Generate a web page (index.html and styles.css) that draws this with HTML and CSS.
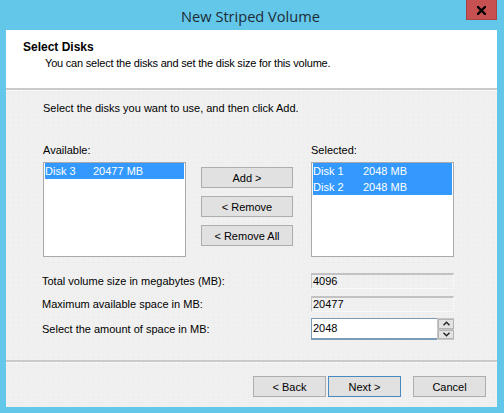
FILE: index.html
```html
<!DOCTYPE html>
<html>
<head>
<meta charset="utf-8">
<link rel="stylesheet" href="styles.css">
</head>
<body>
<div class="window">
  <div class="titlebar">
    <span class="title">New Striped Volume</span>
    <div class="close">
      <svg width="9" height="9" viewBox="0 0 9 9"><path d="M1 1L8 8M8 1L1 8" stroke="#000" stroke-width="2.4" stroke-linecap="square"/></svg>
    </div>
  </div>
  <div class="client">
    <div class="header">
      <div class="h-title">Select Disks</div>
      <div class="h-sub">You can select the disks and set the disk size for this volume.</div>
    </div>
    <div class="sep"></div>
    <div class="body">
      <div class="instr">Select the disks you want to use, and then click Add.</div>
      <div class="lists">
        <div class="col">
          <div class="lbl">Available:</div>
          <div class="listbox">
            <div class="item sel"><span class="c1">Disk 3</span><span>20477 MB</span></div>
          </div>
        </div>
        <div class="mid">
          <div class="btn">Add &gt;</div>
          <div class="btn">&lt; Remove</div>
          <div class="btn">&lt; Remove All</div>
        </div>
        <div class="col">
          <div class="lbl">Selected:</div>
          <div class="listbox">
            <div class="item sel"><span class="c1 c1r">Disk 1</span><span>2048 MB</span></div>
            <div class="item sel"><span class="c1 c1r">Disk 2</span><span>2048 MB</span></div>
          </div>
        </div>
      </div>
      <div class="fields">
        <div class="frow r1">
          <div class="flabel">Total volume size in megabytes (MB):</div>
          <div class="rbox">4096</div>
        </div>
        <div class="frow r2">
          <div class="flabel">Maximum available space in MB:</div>
          <div class="rbox">20477</div>
        </div>
        <div class="frow r3">
          <div class="flabel">Select the amount of space in MB:</div>
          <div class="spin">
            <div class="input">2048</div>
            <div class="arrows">
              <div class="arr"><svg width="7" height="5" viewBox="0 0 7 5"><path d="M0.5 4.2L3.5 1.2L6.5 4.2" fill="none" stroke="#222" stroke-width="1.4"/></svg></div>
              <div class="arr"><svg width="7" height="5" viewBox="0 0 7 5"><path d="M0.5 0.8L3.5 3.8L6.5 0.8" fill="none" stroke="#222" stroke-width="1.4"/></svg></div>
            </div>
          </div>
        </div>
      </div>
    </div>
    <div class="sep sep2"></div>
    <div class="footer">
      <div class="btn fbtn">&lt; Back</div>
      <div class="btn fbtn next">Next &gt;</div>
      <div class="btn fbtn cancel">Cancel</div>
    </div>
  </div>
</div>
</body>
</html>
```
FILE: styles.css
```css
html, body {
  margin: 0;
  padding: 0;
}
body {
  width: 504px;
  height: 413px;
  overflow: hidden;
  font-family: "Liberation Sans", Arial, sans-serif;
  font-size: 11px;
  color: #000;
}
.window {
  width: 504px;
  height: 413px;
  background: #63c7e9;
  display: flex;
  flex-direction: column;
}
.titlebar {
  height: 30px;
  position: relative;
  display: flex;
  align-items: center;
  justify-content: center;
}
.title {
  font-family: "Open Sans", "Noto Sans", sans-serif;
  font-size: 14.6px;
  color: #1c2b36;
  margin-left: -3px;
  margin-top: 1px;
}
.close {
  position: absolute;
  left: 466px;
  top: 0;
  width: 31px;
  height: 20px;
  box-sizing: border-box;
  background: #c75050;
  border: 1px solid #a84444;
  border-top: none;
  display: flex;
  align-items: center;
  justify-content: center;
}
.close svg {
  margin-top: 1px;
}
.client {
  margin: 0 7px 6px 6px;
  flex: 1;
  background-color: #f0f0f0;
  background-image: radial-gradient(circle, rgba(0,0,0,0.035) 0.6px, transparent 1px);
  background-size: 5px 5px;
  display: flex;
  flex-direction: column;
}
.header {
  height: 58px;
  box-sizing: border-box;
  background: #fff;
  padding: 10px 0 0 17px;
}
.h-title {
  font-weight: bold;
  font-size: 12px;
  line-height: 14px;
}
.h-sub {
  margin-top: 2px;
  padding-left: 22px;
  line-height: 14px;
  letter-spacing: -0.2px;
}
.sep {
  height: 0;
  border-top: 2px solid #cacaca;
  border-bottom: 1px dotted #ffffff;
}
.body {
  padding-left: 37px;
  flex: 1;
}
.instr {
  margin-top: 10px;
  line-height: 14px;
}
.lists {
  margin-top: 28px;
  display: flex;
}
.col {
  width: 143px;
}
.lbl {
  line-height: 14px;
  margin-bottom: 5px;
}
.listbox {
  height: 95px;
  box-sizing: border-box;
  border: 1px solid #a7a9ad;
  background: #fff;
  padding: 0 1px 0 1px;
}
.item {
  height: 16px;
  line-height: 16px;
  display: flex;
}
.item.sel {
  background: #3399ff;
  color: #fff;
}
.c1 {
  width: 48px;
}
.c1r {
  width: 50px;
}
.mid {
  margin: 0 18px 0 15px;
  padding-top: 24px;
  display: flex;
  flex-direction: column;
  gap: 8px;
}
.btn {
  width: 92px;
  height: 21px;
  box-sizing: border-box;
  background: #e1e1e1;
  border: 1px solid #adadad;
  display: flex;
  align-items: center;
  justify-content: center;
  line-height: 14px;
}
.fields {
  margin-top: 16px;
  margin-left: -1px;
}
.frow {
  display: flex;
  align-items: center;
}
.r2 {
  margin-top: 7px;
}
.r3 {
  margin-top: 6px;
}
.flabel {
  width: 269px;
}
.rbox {
  width: 143px;
  height: 16px;
  box-sizing: border-box;
  border-top: 2px solid #c2c2c2;
  border-left: 1px solid #c8c8c8;
  border-right: 1px dotted #ffffff;
  border-bottom: 1px dotted #ffffff;
  padding-left: 1px;
  line-height: 13px;
}
.spin {
  display: flex;
  width: 143px;
  height: 22px;
}
.input {
  flex: 1;
  box-sizing: border-box;
  background: #fff;
  border-top: 1px solid #7b9bb7;
  border-left: 1px solid #7b9bb7;
  border-bottom: 2px solid #7b9bb7;
  padding-left: 1px;
  line-height: 19px;
}
.arrows {
  width: 17px;
  display: flex;
  flex-direction: column;
  background: #c7c7c7;
  padding: 1px 0 1px 1px;
  box-sizing: border-box;
  gap: 1px;
}
.arr {
  flex: 1;
  background: #e3e3e3;
  border: 1px solid #b4b4b4;
  display: flex;
  align-items: center;
  justify-content: center;
}
.sep2 {
  margin-bottom: 13px;
}
.footer {
  display: flex;
  justify-content: flex-end;
  padding-right: 11px;
  margin-bottom: 10px;
}
.fbtn {
  width: 73px;
}
.next {
  margin-left: 2px;
  border-color: #4a89c0;
}
.cancel {
  margin-left: 12px;
}
```
